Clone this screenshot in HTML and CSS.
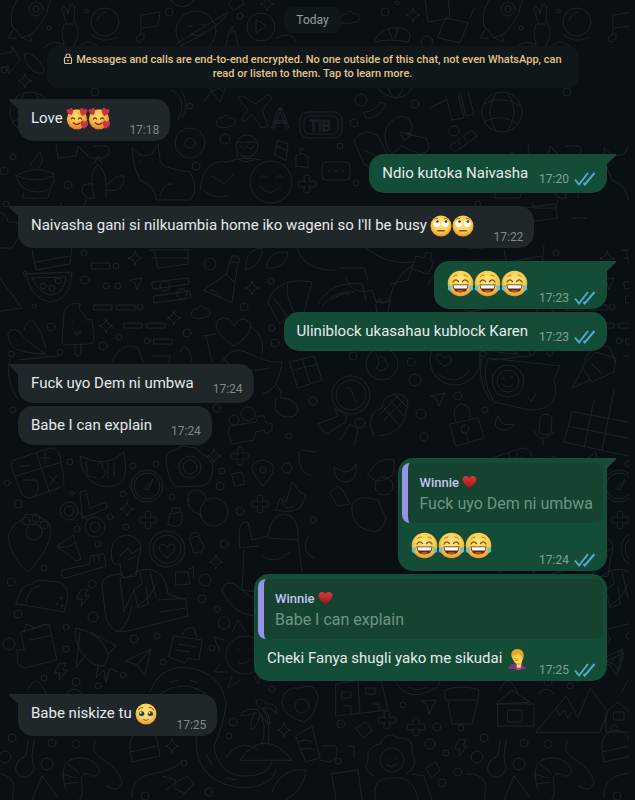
FILE: index.html
```html
<!DOCTYPE html>
<html lang="sw">
<head>
    <meta charset="UTF-8">
    <meta name="viewport" content="width=device-width, initial-scale=1">
    <title>Chat</title>
    <link rel="stylesheet" href="styles.css">
</head>
<body>

<!-- shared icons and emoji -->
<svg class="sprite" aria-hidden="true">
    <defs>
        <radialGradient id="face" cx="50%" cy="40%" r="60%">
            <stop offset="0" stop-color="#ffe98a"/>
            <stop offset="0.65" stop-color="#fbcf4e"/>
            <stop offset="1" stop-color="#e8952a"/>
        </radialGradient>
        <radialGradient id="warm" cx="45%" cy="35%" r="65%">
            <stop offset="0" stop-color="#ffe070"/>
            <stop offset="0.6" stop-color="#fbb53a"/>
            <stop offset="1" stop-color="#e9702c"/>
        </radialGradient>
        <linearGradient id="red" x1="0" y1="0" x2="0" y2="1">
            <stop offset="0" stop-color="#e0393c"/>
            <stop offset="1" stop-color="#9c1420"/>
        </linearGradient>

        <path id="heart-shape" d="M0 6C-8 0-6-6-3-6C-1-6 0-4 0-3.500C0-4 1-6 3-6C6-6 8 0 0 6Z"/>

        <symbol id="ticks" viewBox="0 0 22 16">
            <path d="M1 8.500l4 5L14 2M9.500 12l1.300 1.500L20.500 2" fill="none" stroke="#53a9cc" stroke-width="2"/>
        </symbol>
        <symbol id="tail-in" viewBox="0 0 14 14">
            <path d="M14 0H2Q0 0 1.200 1.800L10 10V14H14Z" fill="#1f272a"/>
        </symbol>
        <symbol id="tail-out" viewBox="0 0 14 14">
            <path d="M0 0H12Q14 0 12.800 1.800L4 10V14H0Z" fill="#144d37"/>
        </symbol>
        <symbol id="lock" viewBox="0 0 10 12">
            <g fill="none" stroke="#e0c58a" stroke-width="1.200">
                <rect x="1.500" y="4.500" width="7" height="6" rx="1"/>
                <path d="M3 4.500V3a2 2 0 0 1 4 0V4.500"/>
            </g>
            <circle cx="5" cy="7.500" r="1" fill="#e0c58a"/>
        </symbol>

        <symbol id="joy" viewBox="0 0 27 27">
            <circle cx="13.500" cy="13.500" r="12.800" fill="url(#face)"/>
            <g fill="none" stroke="#7a4a16" stroke-width="1.300" stroke-linecap="round">
                <path d="M6 12q2.500-4 5.500-.5M15.500 11.500q3-3.500 5.500.5"/>
                <path d="M6.500 6.500q1.500-1.500 3.500-1.500M17 5q2 0 3.500 1.500" stroke="#b97a26" stroke-width="1"/>
            </g>
            <path d="M5.500 14.500H21.500Q21 22.500 13.500 22.500T5.500 14.500Z" fill="#5c2a12"/>
            <path d="M6.500 15.200H20.500Q20.300 18.200 19.500 18.500H7.500Q6.700 18 6.500 15.200Z" fill="#fff"/>
            <path d="M9 21Q13.500 19 18 21Q13.500 23.600 9 21Z" fill="#b9572c"/>
            <path d="M5 15Q.5 16 .8 19Q1.500 21.200 3.500 20.300Q5 19 5 15ZM22 15Q26.500 16 26.200 19Q25.500 21.200 23.500 20.300Q22 19 22 15Z" fill="#5fc4dc"/>
        </symbol>
        <symbol id="love" viewBox="0 0 23 23">
            <circle cx="11.500" cy="11.800" r="10.600" fill="url(#warm)"/>
            <g fill="none" stroke="#6b3411" stroke-width="1.300" stroke-linecap="round">
                <path d="M5.500 11.500q1.700-2.500 3.500 0M13 11.500q1.700-2.500 3.500 0M7.500 15.500q3.700 3.500 7.500 0"/>
            </g>
            <g fill="#c9364a">
                <use href="#heart-shape" transform="translate(4.500 4) rotate(-20) scale(.6)"/>
                <use href="#heart-shape" transform="translate(18 4.500) rotate(15) scale(.7)"/>
                <use href="#heart-shape" transform="translate(19 17.500) rotate(10) scale(.7)"/>
            </g>
        </symbol>
        <symbol id="roll" viewBox="0 0 23 23">
            <circle cx="11.500" cy="11.500" r="11" fill="url(#face)"/>
            <circle cx="7" cy="9" r="3.500" fill="#fff"/>
            <circle cx="16" cy="9" r="3.500" fill="#fff"/>
            <circle cx="7.800" cy="6.800" r="1.400" fill="#5c3a1c"/>
            <circle cx="16.800" cy="6.800" r="1.400" fill="#5c3a1c"/>
            <path d="M8 16.500h7" stroke="#85511a" stroke-width="1.500" stroke-linecap="round"/>
            <path d="M4 4.800q2-2 4.500-1.300M14.500 3.500q2.500-.7 4.500 1.300" fill="none" stroke="#a86a20"/>
        </symbol>
        <symbol id="tears" viewBox="0 0 23 23">
            <circle cx="11.500" cy="11.500" r="11" fill="url(#face)"/>
            <ellipse cx="7" cy="11.500" rx="2.800" ry="3" fill="#4b3420"/>
            <ellipse cx="16" cy="11.500" rx="2.800" ry="3" fill="#4b3420"/>
            <circle cx="6" cy="10.300" r="1" fill="#fff"/>
            <circle cx="15" cy="10.300" r="1" fill="#fff"/>
            <path d="M4.500 13.500q2.500 2 5 0M13.500 13.500q2.500 2 5 0" fill="none" stroke="#a5dcf0" stroke-width="1.500"/>
            <path d="M3.500 7q2-2.500 4.500-2.500M15 4.500q2.500 0 4.500 2.500M9 17.500q2.500 1.500 5 0" fill="none" stroke="#85511a" stroke-linecap="round"/>
        </symbol>
        <symbol id="facepalm" viewBox="0 0 23 23">
            <path d="M2.500 22Q3 17 8 16.500L15 17Q19.500 17.500 20.500 22Z" fill="#8c2f7b"/>
            <path d="M5.500 8Q5 1.500 12 1Q18.500 1 18.500 8Q18.500 12 16.500 14L7 12Z" fill="#e8a52c"/>
            <path d="M7 8Q11 7.500 13 5Q14 8 17 8.500Q17.500 15.500 12 17.500Q7 15 7 8Z" fill="#fcc846"/>
            <path d="M8 8.500l6 1.500q3 1.500 2.500 5L15 22l-4-1 .5-5.500L7.500 10.500Z" fill="#ffd95d"/>
            <path d="M8 10.500l5 1.500M9 12.500l3.500 1M12 16.500l3 .5" stroke="#bf7c1c" stroke-width=".8"/>
            <path d="M10.500 20.500l5.500.5-.5 2h-5z" fill="#a63c94"/>
        </symbol>
        <symbol id="heart" viewBox="0 0 16 15">
            <path d="M8 14C-3 7 .5 1 4.300 1Q7 1 8 3.500Q9 1 11.700 1C15.500 1 19 7 8 14Z" fill="url(#red)"/>
        </symbol>
    </defs>
</svg>

<main class="chat">
    <!-- doodle wallpaper, one tile repeated to the right -->
    <svg class="wallpaper" aria-hidden="true">
        <defs>
            <path id="spark" d="M0-7Q1-1 7 0Q1 1 0 7Q-1 1-7 0Q-1-1 0-7Z"/>
            <path id="bolt" d="M-2-8L5-9L2-2H6L-2 8L-1 1H-6Z"/>
            <path id="plane" d="M-9-1L9-9L4 9L-1 2Z"/>
            <path id="cloud" d="M-6 5Q-12 4-9-1Q-8-5-4-4Q0-10 4-4Q10-5 9 1Q8 5 4 4Q-1 7-6 5Z"/>
            <path id="flower" d="M-2-2Q-5-9 0-9Q5-9 2-2Q9-5 9 0Q9 5 2 2Q5 9 0 9Q-5 9-2 2Q-9 5-9 0Q-9-5-2-2Z"/>
            <path id="dart" d="M-7-5L8-6L1 8L-1-1Z"/>
            <g id="smile"><circle r="21"/><path d="M-11-4q4-5 7 0M5-4q4-5 7 0M-11 4q10 13 21 0"/></g>
            <g id="tile">
                <!-- rows 0 - 100 -->
                <path d="M12 26Q8 2 28-8L50-8Q52 14 32 34L22 38L12 26ZM14 28L8 38L16 38M30 36L32 42L22 38"/>
                <circle cx="36" cy="9" r="7"/><circle cx="36" cy="9" r="3"/>
                <path d="M64 44Q60 28 66 22L62 10Q64 0 68 14Q70-2 75 8L74 20Q82 32 74 46M66 24h8"/>
                <circle cx="105" cy="22" r="14"/><path d="M97 20Q100 12 107 12M91 34Q100 44 116 38"/>
                <path d="M141 34V15L160 12L158 26L142 28M141 34q-8 4-3 8q7 0 6-8"/>
                <circle cx="196" cy="31" r="20"/><path d="M176 44L228 12Q220 28 180 46M188 25q3 3 5 0M201 24q3 3 5 0M191 33q8 6 12-1"/>
                <circle cx="261" cy="27" r="14"/><path d="M256 20v13l10-7zM170 0q12 14 24 0M228 4l12-12 4 12-10 6z"/>
                <path d="M226 46l2-12q5-5 8 0l2 12M229 34l3-8 3 8"/>
                <use href="#spark" x="267" y="4"/><use href="#spark" x="413" y="15"/><use href="#spark" x="25" y="81"/>
                <use href="#cloud" x="350" y="18"/>
                <path d="M425-2L428 22L450 18L448-4M446 18l22 5-8 20-22-5z"/>
                <path d="M374 42Q380 26 400 28Q414 30 408 42Q392 38 374 42M388 28l4 10M398 28l-3 10"/>
                <path d="M276 38q16-8 20 4M474 8l-4 10"/>
                <path d="M0 54L12 52V46L20 60L8 74V66L-4 68Z"/><path d="M24 54Q30 50 40 62Q48 72 40 74Q26 70 24 54Z"/>
                <path d="M44 48q10-12 24 0M78 50q6-14 20-4"/>
                <circle cx="30" cy="112" r="20"/><path d="M12 104Q30 94 48 106M12 122Q28 112 46 124M24 94Q12 110 24 131M36 93Q48 112 36 131"/>
                <path d="M376 86Q382 96 396 98Q412 96 412 84M388 88q2 8 8 10M404 84q-2 10-8 14"/>
                <!-- rows 100 - 200 -->
                <path d="M242 96l14 8 12-10 4 4-10 12 6 16-6 2-10-14-8 8-2-4 6-8-10-12z"/>
                <use href="#cloud" x="226" y="122"/>
                <text x="271" y="128" font-size="28">A</text>
                <rect x="300" y="112" width="42" height="26" rx="8"/><rect x="304" y="116" width="34" height="18" rx="5"/>
                <text x="309" y="131" font-size="15">TiB</text>
                <path d="M172 90q16 10 6 30M182 92q8 12 0 26M204 102q12-20 20-10M206 84l14 18 8-20"/>
                <path d="M366 118Q378 120 386 104L380 102Q376 112 364 112Z"/>
                <path d="M446 96l6 24 12-2-6-24M460 92l6 24 8-2-6-22M430 108l16-8"/>
                <circle cx="190" cy="143" r="15"/><circle cx="190" cy="143" r="5"/>
                <circle cx="247" cy="146" r="11"/><path d="M238 142h18M240 146q4 6 7 0q4 6 7 0M236 152q2 14 18 8"/>
                <path d="M274 154l4-14 10 4-2 16zM276 146l10 4M296 166v-10l6-3 6 4v10zM300 153v-4h4"/>
                <path d="M200 190Q204 158 228 162Q240 156 262 160M212 176l12 8 10-10M203 190q10 10 24 6"/>
                <use href="#smile" x="271" y="182"/>
                <use href="#flower" x="307" y="184"/>
                <path d="M16 176Q34 164 54 174Q56 192 38 192Q20 192 16 176ZM18 176Q34 184 54 176M30 166q6-10 10-14q6 12-4 18M24 192l-2 6h26l2-8"/>
                <path d="M56 144l2 14 18-2 2-10 12 12 12 0q10-2 6-12l-14 0"/>
                <path d="M94 198Q88 172 98 164Q108 172 106 198M94 184q-14-2-12 8q4 8 12 6M106 190q18 4 18-14q-8-2-18 10M94 164l4-8 4 8"/>
                <path d="M134 164L132 148L142 156L152 154L158 144L160 160Q160 168 190 172Q200 190 190 200H156Q156 186 140 180ZM140 162h1M152 160h1M160 196q4-14 12-12"/>
                <path d="M386 128q10-16 22-10q10 12-2 16L426 138q8 14-6 16l-18-8-10 8q-10-10-6-26z"/>
                <path d="M404 140l-4-8 12 2z"/>
                <path d="M354 140Q364 126 378 136L390 160Q376 176 364 164ZM364 150l12 6"/>
                <path d="M450 146l22-16 5 6-22 16zM458 141l3 4M464 137l3 4"/>
                <rect x="322" y="162" width="28" height="18" rx="4"/><path d="M328 171h2M335 171h2M342 171h2"/>
                <!-- rows 200 - 300 -->
                <path d="M-8 214q14-6 16 8q12-2 14 10l-10 16h-16M32 250l4 20 34-6 2-18M36 262l34-6"/>
                <path d="M26 274L72 272Q70 300 50 302Q30 298 26 274ZM32 278L66 277Q64 294 50 295Q38 292 32 278"/>
                <circle cx="43" cy="286" r="3"/><circle cx="52" cy="288" r="3"/><circle cx="58" cy="281" r="3"/>
                <path d="M92 263h18v6h-18zM130 280l12-2-5 12-2-7zM94 305h18v5h-18zM117 305h18v5h-18zM124 323h18v5h-18zM147 323h18v5h-18zM154 339h18v5h-18z"/>
                <use href="#spark" x="135" y="258"/><use href="#spark" x="252" y="288"/><use href="#spark" x="174" y="318"/><use href="#spark" x="106" y="326"/>
                <path d="M150 250h40M154 250l4 18 30-4v-14M152 258h36M152 282l36-4 1 6-36 5zM154 296l36-5 1 7-37 5z"/><circle cx="165" cy="286" r="5"/><circle cx="182" cy="294" r="5"/>
                <path d="M204 290L226 274L230 262L238 262L236 276L232 302ZM226 274l8 8M210 290q8 0 10 8M230 262l2-6h6l2 6"/>
                <path d="M246 270Q244 250 262 248Q262 266 246 270ZM266 268Q268 250 288 252Q286 270 266 268M296 246q8 26 40 24"/>
                <path d="M268 302Q276 276 312 282L304 312Q284 316 280 324ZM274 298l14 20M288 282Q284 296 296 316"/>
                <path d="M346 278Q352 296 372 290L376 302L388 302Q396 274 414 264M340 268l24 0 4 12M366 248q22 18 48 14l-6 18-18 4"/>
                <path d="M318 304q14-24 44-20l4 16M322 306q12-16 32-14M332 300q8-8 18-6"/>
                <path d="M412 268l4-12 8 2 2-6 6 2-2 6 4 2-6 12zM442 272l8-6-2 12zM428 284q10-18 18-4"/>
                <path d="M524 208l30-4 4 14-32 4zM376 304l4-6 2 6 8-4-2 12-10 6z"/>
                <path d="M60 202l2 6h22l2-8M100 218h14M340 214l6 8M420 228q4 14 20 6"/>
                <!-- rows 300 - 400 -->
                <path d="M-8 268L22 308L-6 312Z"/>
                <path d="M62 342L64 312Q70 300 80 304Q78 312 84 314Q84 320 92 320L94 338Q94 344 88 344L68 345Q62 345 62 342ZM75 345v9q3 4 6 0v-9M72 322h1M82 322h1M74 333q4 4 7-1z"/>
                <path d="M8 334Q12 326 20 332Q24 340 46 354Q26 354 14 348Q8 342 8 334ZM24 330q4-12 10-8q8 10 12 26"/>
                <use href="#cloud" x="201" y="313"/>
                <path d="M234 346Q210 330 218 320Q228 314 234 326Q240 314 250 322Q254 334 234 346ZM202 336l14-2M206 336l6 26M250 326q16 10 12 28M222 362Q232 344 250 354Q270 364 282 362Q278 392 262 394M224 358q10 18 46 10"/>
                <path d="M112 362Q122 340 138 348L143 362M180 352q4-10 10 0l2 10M152 356h18l-2 12"/>
                <path d="M290 362l24-6 8 24-24 8zM294 370l24-6M302 359l8 24M276 384q8 10 4 14q16 0 18 12q-2 10-16 6q-10-6-6-18"/>
                <circle cx="382" cy="364" r="16"/><path d="M376 354q6 8 0 14q6 6 12-2q-2-8-8-10"/>
                <circle cx="455" cy="360" r="25"/><path d="M444 366q-12-8-6-12q4 0 6 4q4-4 7 0q2 6-7 8zM438 374q18 14 32-4"/>
                <circle cx="351" cy="395" r="19"/><circle cx="351" cy="395" r="15"/><path d="M346 388q4-2 6 4l4 10"/>
                <path d="M10 358q-6 20 8 42M18 360l40-4"/>
                <path d="M488 358L560 366L554 380Q562 410 530 410L494 402Q480 380 488 358Z"/>
                <circle cx="508" cy="381" r="16"/><circle cx="508" cy="381" r="11"/><path d="M502 378h2M511 377h2M502 384q6 6 11 0M528 398l3 3 5-7"/>
                <path d="M582 366l14-14 20 6-2 14-22 10zM584 366l-12 22 18-8M592 364l10 10M540 422v-4q6-8 12 0l-1 14q-6 6-12 0zM534 430q6 16 20 2M543 440v6"/>
                <path d="M574 412l54 10M568 426l60 12M572 412l-8 30 64 14M594 400l-10 48M614 390l-12 60"/>
                <!-- rows 400 - 500 -->
                <path d="M374 436Q364 414 382 408Q382 394 400 394Q412 398 406 412Q404 432 380 436M384 408l16 18M390 400l14 16M396 396l10 10M404 400l-20 20M398 396l-18 18"/>
                <path d="M431 396l14-3-6 13-3-8zM450 424l28-6 6 20-28 8zM456 422Q450 406 462 404Q472 406 470 418"/>
                <circle cx="465" cy="429" r="4"/><path d="M466 433l2 8M498 416q-8 12 6 14q8 0 10-6q-12 4-16-8"/>
                <path d="M318 424l20-8-4-8 12 6v8l-20 12zM340 440l10-16 8 6-4 16"/>
                <path d="M228 432l2-6 26-4 2-6h6l2 6 6 2v6l-6 4-2-4-8 2-2 8-22 4z"/><circle cx="248" cy="414" r="7"/><circle cx="234" cy="420" r="5"/>
                <path d="M14 460l36-12q8 0 10 8l4 24q0 6-6 8l-28 10q-8 0-10-8L12 468q-2-6 2-8zM36 452l14 42M16 476l46-14M40 458h10M45 453v10M20 466h10M49 476l9 8M57 475l-7 10M22 480h14q6 8-2 16"/>
                <path d="M80 456l10 4q14 4 26-2l8-6Q130 486 112 486Q84 490 80 456ZM86 462l2 14 8 2M98 464q6-6 4 4q8 4 0 10M108 462v16M114 462v14"/>
                <circle cx="147" cy="486" r="16"/><circle cx="147" cy="486" r="13"/><path d="M145 489l8-10-4 10z"/>
                <path d="M166 456Q168 450 176 450L182 446L196 448L202 454Q212 458 213 468Q212 486 200 486L176 487Q166 476 166 456Z"/><circle cx="190" cy="467" r="11"/><circle cx="190" cy="467" r="7"/>
                <path d="M263 486Q248 470 253 464Q262 456 272 464Q278 470 263 486ZM232 474l10-2 3 12-10 2zM299 452q-2 20 12 24M302 450l14 2"/><circle cx="263" cy="470" r="3"/>
                <use href="#spark" x="214" y="456"/><use href="#flower" x="240" y="456"/>
                <path d="M340 470q10 6 16-6q2 16-10 18q-12 0-12-14zM368 474q10-18 26-14v14q-18 14-26 0zM330 492l8-6 6 6 6 12-12 2zM352 504q6-10 26-4l8 18q-4 18-18 12q-18-4-16-26z"/>
                <circle cx="384" cy="486" r="9"/>
                <!-- rows 500 - 600 -->
                <circle cx="69" cy="511" r="9"/><circle cx="69" cy="511" r="5"/><circle cx="95" cy="527" r="10"/><circle cx="95" cy="527" r="5"/><path d="M82 518l-2-26 6-2 4 18 16-6 1 6-24 10M78 512l10 8"/>
                <use href="#spark" x="127" y="509"/><use href="#flower" x="148" y="520"/><use href="#flower" x="260" y="504"/>
                <path d="M168 524l2-10 12-2v10q-4 8-14 2zM172 512v-4h8v4M190 502Q184 494 194 490Q206 490 206 500"/><circle cx="214" cy="512" r="14"/><path d="M188 498q-4 10 14 18"/>
                <path d="M8 536Q12 524 22 520L26 514Q40 514 50 524Q54 546 28 572Q10 558 8 536Z"/><circle cx="34" cy="532" r="8"/><circle cx="26" cy="521" r="4"/><circle cx="36" cy="518" r="4"/><circle cx="44" cy="525" r="4"/>
                <path d="M57 546l16-11 8 24q-6 4-8-1zM57 546q8 4 18-3M62 570l28-6v-8l14-2 2 12-40 12q-6 0-4-8zM94 556v6M99 555v6"/>
                <path d="M112 560Q108 538 126 535Q140 536 141 548L138 562L136 576L122 578L120 564Q112 566 112 560ZM120 556l8-8 4 6 8-6M128 560l8-4"/>
                <path d="M102 586Q100 576 120 574L126 578L140 570Q160 566 166 584L168 594L186 600L188 616L132 630Q112 636 106 618ZM120 578l4 34 10-22M132 606q-6 26-16 26M140 572l2 12-8 6 4 18 10-4-2-18M150 572l6 26M158 600l30-2M160 612l26-4M156 584l-6 12-12 10"/>
                <circle cx="167" cy="549" r="18"/><circle cx="167" cy="549" r="14"/><path d="M167 558Q156 550 160 545Q165 543 167 548Q169 543 174 545Q178 550 167 558Z"/>
                <path d="M190 538l8-2 6 10-2 6-8 1zM190 535l6-3 4 4M176 572h12l2 12-14 1zM188 570l5-3 1 10"/>
                <use href="#spark" x="216" y="562"/>
                <path d="M276 510l4-12 6 4 6-20 8 10 6 4-6 12q-10 6-24 2zM282 500q2 12 12 6M240 548Q236 520 248 522L252 540L268 536Q270 516 284 514Q300 516 298 540L302 572M240 548l18-2M268 538l30 2M244 550l-2 40 16 2M262 556q14 10 28-4"/>
                <path d="M308 536q-8 16 6 22M222 590q2-10 12-6l26 20-6 12q-22-2-32-26z"/>
                <!-- rows 600 - 700 -->
                <path d="M16 604Q20 584 32 584L38 580L58 582Q68 584 68 598L64 612L18 604Q16 606 16 604ZM26 602Q28 588 40 586"/>
                <circle cx="57" cy="604" r="1"/><circle cx="61" cy="598" r="1"/><circle cx="62" cy="606" r="1"/>
                <use href="#bolt" x="83" y="598"/><use href="#bolt" x="61" y="672"/>
                <path d="M21 632l28-8 8 36-32 8-8-4q2-10-1-14h8zM24 632l2-8 10 4 8-4 6 2M30 640l20-4"/>
                <path d="M76 628q-4 10 8 28q8 10 20 10l4-10q-4-22-32-28zM80 632l-4 36 10-14M90 632l26 14-8 8M98 666l-2 12 8-8 2 12 4-14 8 4"/>
                <path d="M126 661L151 649L145 675L137 665ZM137 665L151 649"/>
                <path d="M174 636l28 4-3 20-10-2-4 5-16-6zM182 636q2-10 12-8l3 10M178 644l18 3M176 650l14 2"/>
                <circle cx="245" cy="655" r="19"/><path d="M232 632l6-12 8 12M224 640l-10-3 6 14M220 664l-6 8 12 0M232 676l-4 12 12-8M254 676l4 8 4-12M238 650h1M250 650h1M238 662q6 4 12-2"/>
                <use href="#plane" x="615" y="662"/>
                <!-- rows 700 - 800 -->
                <path d="M150 692Q160 664 190 668Q222 674 226 704Q224 724 214 746Q218 776 246 776Q268 776 272 762M160 694Q184 678 206 694Q198 720 196 740Q196 784 244 788Q272 786 276 770"/>
                <path d="M170 682l8-2M190 680l8 3M212 700l2 10M208 726l-2 10M206 754l6 10M226 778l10 2"/>
                <path d="M226 758q12-20 32-8M240 760q24-34 52 0zM262 744Q268 724 258 710M268 744q4-24-6-36M258 710q-12-4-18 6q10 0 16-4q-8 10-4 18q8-8 8-18q4 10 10 12q0-12-8-16q10-2 14 6q2-12-10-10q-2-6-10-4q0 6 4 8"/>
                <path d="M282 702Q284 686 298 688Q316 682 318 696Q316 716 304 722Q282 716 282 702Z"/><circle cx="302" cy="706" r="7"/>
                <path d="M296 736l16-10 8 32-14 4zM298 742q8-4 14 0M300 750q8-4 14 0"/>
                <path d="M336 684l44-8 8 34-52 6zM342 692h9v6h-9zM366 688h9v6h-9zM344 706h7v8M372 704h7v7M358 680l2 34"/>
                <path d="M396 682q12 22 40 6q8-8 2-16M408 686q10 8 20 0M445 690q16-6 34 0l-1 10h-32zM448 702l4 22 20 0 6-24"/>
                <use href="#dart" x="428" y="706"/>
                <path d="M496 704l16-14 18 12zM498 704l36 0v22h-36zM508 710h14v12h-14z"/>
                <path d="M536 732L566 696L578 718L590 688L608 712L600 732ZM556 708l4 8 4-6 4 8 4-6M604 714l14-12 12 10M606 716v16h24M614 712h10v8h-10z"/>
                <use href="#spark" x="284" y="730"/><use href="#spark" x="172" y="746"/>
                <use href="#flower" x="387" y="720"/><use href="#flower" x="416" y="727"/>
                <path d="M356 728l10-6 6 8-8 8z"/>
                <path d="M130 750q-2-16 12-20q14 0 16 14l2 12-28 6zM130 752l28-6M138 730l4-6 5 5"/>
                <path d="M28 740l-2 16q-12 4-10 16q10 12 18-2l-2-14 2-16M-6 774q14-2 20 10l-2 22M32 800l10-24 16 22M66 694q8-10 16 0M28 690q8-20 18 4"/>
                <path d="M66 790Q56 758 80 758Q94 758 100 770Q96 780 88 774Q78 772 82 786Q84 800 76 802M68 764l10 8M62 774l14 4M64 784l14-2M96 740q-8 12 8 20q14 8 18 22q-4 12-16 4M132 798q-2-20 20-24q22-4 30-12"/>
                <path d="M162 776l14 4-2 8 12 6M166 790l10-8 12-6 6 8-14 14M272 792q8-24 34-22q-2 20-20 30"/>
                <circle cx="392" cy="760" r="12"/><path d="M374 776q-12-6-6-16q-2-14 12-16q6-14 18-6q16-2 14 14q8 14-6 22M376 800q-6-22 16-22q22-2 26 22M330 774l28-4 4 30M332 776l4 24M386 758h1M396 758h1M387 765q5 4 9-1M412 774l12 2 8 24"/>
                <path d="M322 746l14 0q4 12-6 16l-10-2M426 768l10-6 4 8-8 8zM348 746h6v12"/>
                <use href="#bolt" x="461" y="748"/>
                <!-- little rings between the drawings -->
                <g>
                    <circle cx="49" cy="28" r="2"/><circle cx="86" cy="11" r="2"/><circle cx="169" cy="12" r="4"/><circle cx="240" cy="16" r="3"/><circle cx="385" cy="12" r="4"/><circle cx="397" cy="3" r="2"/>
                    <circle cx="427" cy="42" r="6"/><circle cx="95" cy="92" r="4"/><circle cx="4" cy="70" r="3"/><circle cx="361" cy="100" r="6"/><circle cx="415" cy="104" r="4"/><circle cx="354" cy="123" r="4"/>
                    <circle cx="225" cy="139" r="5"/><circle cx="190" cy="106" r="3"/><circle cx="13" cy="157" r="3"/><circle cx="4" cy="171" r="4"/><circle cx="68" cy="185" r="4"/><circle cx="196" cy="166" r="4"/>
                    <circle cx="454" cy="131" r="5"/><circle cx="340" cy="146" r="3"/><circle cx="356" cy="183" r="3"/><circle cx="408" cy="166" r="3"/><circle cx="6" cy="204" r="3"/>
                    <circle cx="84" cy="253" r="3"/><circle cx="25" cy="273" r="2"/><circle cx="116" cy="266" r="3"/><circle cx="85" cy="280" r="4"/><circle cx="106" cy="286" r="3"/><circle cx="118" cy="286" r="3"/>
                    <circle cx="210" cy="264" r="6"/><circle cx="271" cy="281" r="3"/><circle cx="244" cy="307" r="4"/><circle cx="140" cy="307" r="3"/><circle cx="34" cy="306" r="2"/><circle cx="51" cy="327" r="4"/>
                    <circle cx="119" cy="337" r="3"/><circle cx="187" cy="333" r="4"/><circle cx="103" cy="346" r="4"/><circle cx="60" cy="352" r="3"/><circle cx="11" cy="354" r="3"/><circle cx="147" cy="341" r="3"/>
                    <circle cx="275" cy="343" r="4"/><circle cx="272" cy="328" r="3"/><circle cx="13" cy="410" r="3"/><circle cx="217" cy="408" r="4"/><circle cx="353" cy="356" r="4"/><circle cx="411" cy="362" r="4"/>
                    <circle cx="415" cy="380" r="6"/><circle cx="421" cy="414" r="5"/><circle cx="458" cy="396" r="4"/><circle cx="360" cy="423" r="5"/><circle cx="289" cy="436" r="3"/><circle cx="313" cy="401" r="4"/>
                    <circle cx="424" cy="437" r="4"/><circle cx="70" cy="462" r="3"/><circle cx="133" cy="466" r="3"/><circle cx="156" cy="464" r="3"/><circle cx="222" cy="471" r="3"/><circle cx="287" cy="468" r="5"/>
                    <circle cx="7" cy="483" r="3"/><circle cx="18" cy="504" r="4"/><circle cx="72" cy="493" r="2"/><circle cx="123" cy="494" r="3"/><circle cx="172" cy="497" r="3"/><circle cx="220" cy="486" r="4"/>
                    <circle cx="110" cy="517" r="3"/><circle cx="77" cy="529" r="3"/><circle cx="126" cy="527" r="3"/><circle cx="240" cy="511" r="4"/><circle cx="313" cy="520" r="3"/><circle cx="224" cy="544" r="4"/>
                    <circle cx="44" cy="568" r="3"/><circle cx="98" cy="544" r="3"/><circle cx="92" cy="584" r="4"/><circle cx="11" cy="582" r="4"/><circle cx="205" cy="580" r="6"/><circle cx="202" cy="599" r="4"/>
                    <circle cx="18" cy="614" r="4"/><circle cx="93" cy="617" r="5"/><circle cx="217" cy="609" r="3"/><circle cx="224" cy="623" r="6"/><circle cx="9" cy="644" r="6"/><circle cx="66" cy="627" r="3"/>
                    <circle cx="66" cy="649" r="3"/><circle cx="134" cy="639" r="4"/><circle cx="157" cy="636" r="3"/><circle cx="212" cy="648" r="3"/><circle cx="163" cy="662" r="3"/><circle cx="123" cy="675" r="3"/>
                    <circle cx="76" cy="682" r="4"/><circle cx="44" cy="678" r="3"/><circle cx="98" cy="686" r="3"/><circle cx="272" cy="689" r="3"/><circle cx="233" cy="722" r="4"/><circle cx="229" cy="736" r="3"/>
                    <circle cx="12" cy="738" r="4"/><circle cx="52" cy="743" r="4"/><circle cx="76" cy="744" r="4"/><circle cx="5" cy="757" r="6"/><circle cx="47" cy="764" r="6"/><circle cx="184" cy="763" r="3"/>
                    <circle cx="145" cy="796" r="4"/><circle cx="209" cy="792" r="4"/><circle cx="341" cy="724" r="4"/><circle cx="437" cy="727" r="4"/><circle cx="430" cy="744" r="5"/><circle cx="446" cy="753" r="3"/>
                    <circle cx="458" cy="772" r="4"/><circle cx="403" cy="705" r="3"/><circle cx="442" cy="783" r="4"/><circle cx="338" cy="761" r="3"/><circle cx="461" cy="728" r="3"/>
                </g>
            </g>
        </defs>
        <use href="#tile"/>
        <use href="#tile" x="472"/>
        <use href="#tile" x="944"/>
    </svg>

    <div class="day">Today</div>

    <button type="button" class="notice">
        <svg class="lock"><use href="#lock"/></svg>
        Messages and calls are end-to-end encrypted. No one outside of this chat, not even WhatsApp, can read or listen to them. Tap to learn more.
    </button>

    <div class="message in first tall">
        <svg class="tail"><use href="#tail-in"/></svg>
        <div class="line">
            <p class="text">Love <svg class="emoji" role="img" aria-label="smiling face with hearts"><use href="#love"/></svg><svg class="emoji" role="img" aria-label="smiling face with hearts"><use href="#love"/></svg></p>
            <span class="meta">17:18</span>
        </div>
    </div>

    <div class="message out first">
        <svg class="tail"><use href="#tail-out"/></svg>
        <div class="line">
            <p class="text">Ndio kutoka Naivasha</p>
            <span class="meta">17:20 <svg class="ticks" role="img" aria-label="Read"><use href="#ticks"/></svg></span>
        </div>
    </div>

    <div class="message in first tall">
        <svg class="tail"><use href="#tail-in"/></svg>
        <div class="line">
            <p class="text">Naivasha gani si nilkuambia home iko wageni so I'll be busy <svg class="emoji" role="img" aria-label="face with rolling eyes"><use href="#roll"/></svg><svg class="emoji" role="img" aria-label="face with rolling eyes"><use href="#roll"/></svg></p>
            <span class="meta">17:22</span>
        </div>
    </div>

    <div class="message out first tall">
        <svg class="tail"><use href="#tail-out"/></svg>
        <div class="line">
            <p class="big-emoji">
                <svg role="img" aria-label="face with tears of joy"><use href="#joy"/></svg>
                <svg role="img" aria-label="face with tears of joy"><use href="#joy"/></svg>
                <svg role="img" aria-label="face with tears of joy"><use href="#joy"/></svg>
            </p>
            <span class="meta">17:23 <svg class="ticks" role="img" aria-label="Read"><use href="#ticks"/></svg></span>
        </div>
    </div>

    <div class="message out">
        <div class="line">
            <p class="text">Uliniblock ukasahau kublock Karen</p>
            <span class="meta">17:23 <svg class="ticks" role="img" aria-label="Read"><use href="#ticks"/></svg></span>
        </div>
    </div>

    <div class="message in first">
        <svg class="tail"><use href="#tail-in"/></svg>
        <div class="line">
            <p class="text">Fuck uyo Dem ni umbwa</p>
            <span class="meta">17:24</span>
        </div>
    </div>

    <div class="message in">
        <div class="line">
            <p class="text">Babe I can explain</p>
            <span class="meta">17:24</span>
        </div>
    </div>

    <div class="message out first tall reply">
        <svg class="tail"><use href="#tail-out"/></svg>
        <blockquote class="quote">
            <div class="quote-name">Winnie <svg class="heart" role="img" aria-label="heart"><use href="#heart"/></svg></div>
            <div class="quote-text">Fuck uyo Dem ni umbwa</div>
        </blockquote>
        <div class="line">
            <p class="big-emoji">
                <svg role="img" aria-label="face with tears of joy"><use href="#joy"/></svg>
                <svg role="img" aria-label="face with tears of joy"><use href="#joy"/></svg>
                <svg role="img" aria-label="face with tears of joy"><use href="#joy"/></svg>
            </p>
            <span class="meta">17:24 <svg class="ticks" role="img" aria-label="Read"><use href="#ticks"/></svg></span>
        </div>
    </div>

    <div class="message out tall reply">
        <blockquote class="quote">
            <div class="quote-name">Winnie <svg class="heart" role="img" aria-label="heart"><use href="#heart"/></svg></div>
            <div class="quote-text">Babe I can explain</div>
        </blockquote>
        <div class="line">
            <p class="text">Cheki Fanya shugli yako me sikudai <svg class="emoji" role="img" aria-label="facepalm"><use href="#facepalm"/></svg></p>
            <span class="meta">17:25 <svg class="ticks" role="img" aria-label="Read"><use href="#ticks"/></svg></span>
        </div>
    </div>

    <div class="message in first tall">
        <svg class="tail"><use href="#tail-in"/></svg>
        <div class="line">
            <p class="text">Babe niskize tu <svg class="emoji" role="img" aria-label="face holding back tears"><use href="#tears"/></svg></p>
            <span class="meta">17:25</span>
        </div>
    </div>
</main>

</body>
</html>
```
FILE: styles.css
```css
* {
    box-sizing: border-box;
}

body {
    margin: 0;
    background: #0a0f11;
    color: #e6eaec;
    font-family: Roboto, "Liberation Sans", sans-serif;
    font-size: 15px;
    line-height: 20px;
}

p,
blockquote {
    margin: 0;
}

.sprite {
    position: absolute;
    width: 0;
    height: 0;
}

.chat {
    position: relative;
    display: flex;
    flex-direction: column;
    align-items: flex-start;
    min-height: 100vh;
    margin-right: 6px;
    padding: 7px 22px 60px 18px;
    background: #0a0f14;
    isolation: isolate;
    overflow: hidden;
}

.wallpaper {
    position: absolute;
    inset: 0;
    z-index: -1;
    width: 100%;
    height: 100%;
    fill: none;
    stroke: #1d2429;
    stroke-width: 1px;
    stroke-linejoin: round;
    stroke-linecap: round;
}

.day {
    align-self: center;
    padding: 3px 12px;
    border-radius: 8px;
    background: #10171b;
    color: #959c9f;
    font-size: 12px;
}

.notice {
    align-self: center;
    max-width: 532px;
    margin-top: 13px;
    padding: 7px 12px;
    border: none;
    border-radius: 12px;
    background: #10171b;
    color: #e0c58a;
    font-family: inherit;
    font-size: 11px;
    font-weight: 500;
    line-height: 14px;
    text-align: center;
    cursor: pointer;
}

.lock {
    width: 10px;
    height: 12px;
    vertical-align: -2px;
}

/* bubbles */
.message {
    position: relative;
    max-width: 90%;
    margin-top: 3px;
    border-radius: 15px;
}

.message.first {
    margin-top: 13px;
}

.notice + .message.first {
    margin-top: 11px;
}

.in {
    background: #1f272a;
}

.out {
    align-self: flex-end;
    background: #144d37;
}

.in.first {
    border-top-left-radius: 0;
}

.out.first {
    border-top-right-radius: 0;
}

.tail {
    position: absolute;
    top: 0;
    width: 14px;
    height: 14px;
}

.in .tail {
    left: -10px;
}

.out .tail {
    right: -10px;
}

.line {
    display: flex;
    align-items: flex-end;
    justify-content: space-between;
    gap: 19px;
    padding: 0 11px 0 13px;
}

.out .line {
    gap: 11px;
}

.text {
    padding: 9px 0 10px;
}

.tall .text {
    padding-bottom: 13px;
}

.emoji {
    width: 22px;
    height: 22px;
    margin: -2px 0;
    vertical-align: -5px;
}

.big-emoji {
    display: flex;
    padding: 9px 0 12px;
}

.big-emoji svg {
    width: 27px;
    height: 27px;
}

.meta {
    display: flex;
    gap: 5px;
    margin-bottom: 6px;
    color: #7f878b;
    font-size: 12px;
    line-height: 16px;
}

.tall .meta {
    margin-bottom: 3px;
}

.out .meta {
    color: #7fa293;
}

.ticks {
    width: 22px;
    height: 16px;
}

/* quoted reply */
.reply {
    padding-top: 5px;
}

.quote {
    margin: 0 4px;
    padding: 10px 10px 8px 11px;
    border-left: 6px solid #9791e8;
    border-radius: 8px;
    background: #15432f;
}

.quote-name {
    color: #c6c4f0;
    font-size: 13px;
    font-weight: 500;
}

.heart {
    width: 15px;
    height: 14px;
    vertical-align: -2px;
}

.quote-text {
    color: #6f9484;
    font-size: 16px;
    line-height: 22px;
}
```
